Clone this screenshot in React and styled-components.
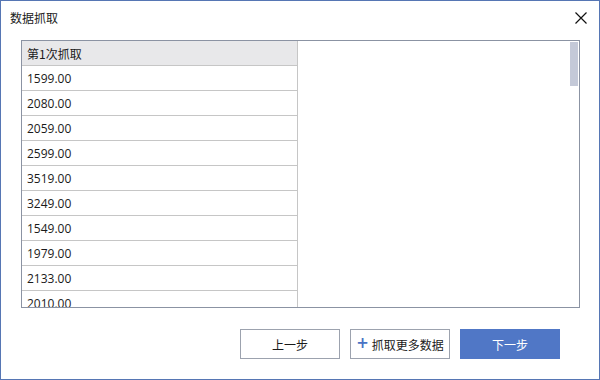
import styled, { createGlobalStyle } from "styled-components";

const GlobalStyle = createGlobalStyle`
	html, body {
		margin: 0;
		padding: 0;
		background: #ffffff;
	}
	* {
		box-sizing: border-box;
	}
`;

const Window = styled.div`
	width: 600px;
	height: 380px;
	border: 1px solid #5676b4;
	background: #ffffff;
	display: flex;
	flex-direction: column;
	font-family: "Open Sans", "Noto Sans CJK SC", sans-serif;
	font-size: 12px;
	color: #1a1a1a;
`;

const TitleBar = styled.div`
	height: 32px;
	display: flex;
	align-items: center;
	justify-content: space-between;
	padding: 1px 10px 0 9px;
`;

const Title = styled.div`
	font-family: "Noto Sans CJK SC", sans-serif;
	font-size: 12px;
	color: #1a1a1a;
`;

const CloseButton = styled.button`
	width: 16px;
	height: 16px;
	padding: 0;
	border: none;
	background: transparent;
	display: flex;
	align-items: center;
	justify-content: center;
`;

const Body = styled.div`
	flex: 1;
	display: flex;
	flex-direction: column;
	padding: 7px 39px 20px 20px;
`;

const Frame = styled.div`
	position: relative;
	width: 559px;
	height: 268px;
	border: 1px solid #8b93a3;
	overflow: hidden;
`;

const Grid = styled.div`
	width: 276px;
	display: flex;
	flex-direction: column;
`;

const Cell = styled.div`
	height: 25px;
	flex-shrink: 0;
	display: flex;
	align-items: center;
	padding: 0 5px;
	border-right: 1px solid #c6c6c6;
	border-bottom: 1px solid #c6c6c6;
	background: ${(p) => (p.$head ? "#e8e8ea" : "#ffffff")};
	font-family: ${(p) => (p.$head ? `"Noto Sans CJK SC", sans-serif` : `"Open Sans", sans-serif`)};
	font-size: 12px;
	color: #1a1a1a;
`;

const Thumb = styled.div`
	position: absolute;
	top: 1px;
	right: 1px;
	width: 8px;
	height: 44px;
	background: #c4c9d8;
`;

const Footer = styled.div`
	margin-top: 21px;
	display: flex;
	justify-content: flex-end;
	gap: 10px;
`;

const Button = styled.button`
	width: 100px;
	height: 30px;
	display: flex;
	align-items: center;
	justify-content: center;
	gap: 3px;
	font-family: "Noto Sans CJK SC", sans-serif;
	font-size: 12px;
	border: 1px solid ${(p) => (p.$primary ? "#5077c6" : "#9ca2ae")};
	background: ${(p) => (p.$primary ? "#5077c6" : "#ffffff")};
	color: ${(p) => (p.$primary ? "#ffffff" : "#1a1a1a")};
	padding: 0;
`;

const Plus = styled.span`
	color: #4a72c4;
	font-family: "DejaVu Sans", sans-serif;
	font-size: 15px;
	font-weight: bold;
	line-height: 1;
	margin-top: -1px;
`;

const values = [
	"1599.00",
	"2080.00",
	"2059.00",
	"2599.00",
	"3519.00",
	"3249.00",
	"1549.00",
	"1979.00",
	"2133.00",
	"2010.00",
];

export default function App() {
	return (
		<>
			<GlobalStyle />
			<Window>
				<TitleBar>
					<Title>数据抓取</Title>
					<CloseButton>
						<svg width="12" height="12" viewBox="0 0 12 12">
							<path d="M0.5 0.5 L11.5 11.5 M11.5 0.5 L0.5 11.5" stroke="#111" strokeWidth="1.2" />
						</svg>
					</CloseButton>
				</TitleBar>
				<Body>
					<Frame>
						<Grid>
							<Cell $head>第1次抓取</Cell>
							{values.map((v, i) => (
								<Cell key={i}>{v}</Cell>
							))}
						</Grid>
						<Thumb />
					</Frame>
					<Footer>
						<Button>上一步</Button>
						<Button>
							<Plus>+</Plus>抓取更多数据
						</Button>
						<Button $primary>下一步</Button>
					</Footer>
				</Body>
			</Window>
		</>
	);
}
